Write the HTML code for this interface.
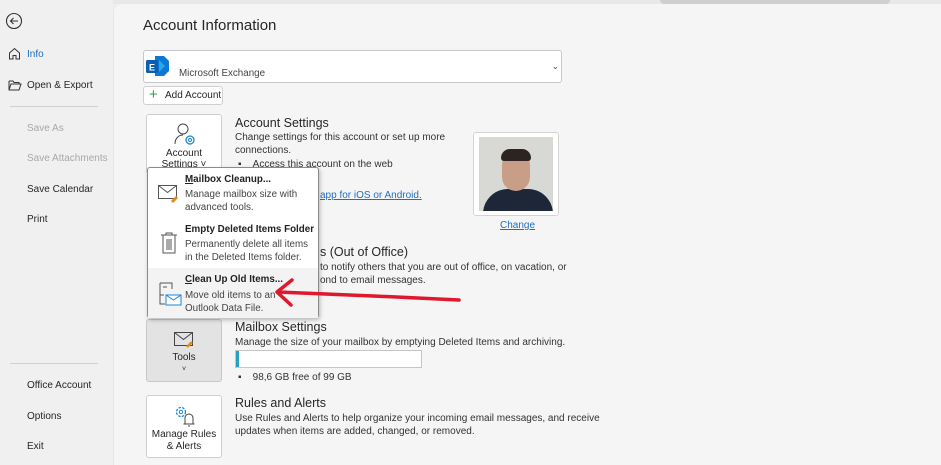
<!DOCTYPE html>
<html><head><style>
*{margin:0;padding:0;box-sizing:border-box}
body{width:941px;height:465px;overflow:hidden;background:#efefef;font-family:"Liberation Sans",sans-serif;color:#262626;position:relative;font-size:10px}
.a{position:absolute}
.side{left:0;top:0;width:113px;height:465px;background:#f0f0f0}
.si{position:absolute;left:27px;font-size:10px;color:#262626}
.dis{color:#a8a8a8}
.main{left:113px;top:4px;width:828px;height:461px;background:#f5f5f5;border-top-left-radius:8px;border-left:1px solid #e6e6e6}
.btn{position:absolute;background:#fff;border:1px solid #d0d0d0;border-radius:3px;text-align:center;font-size:10px;line-height:12px;color:#262626}
h2{position:absolute;font-size:12.5px;font-weight:normal;color:#262626}
.t{position:absolute;font-size:10px;color:#333;line-height:13px}
.menu{left:147px;top:167px;width:172px;height:151px;background:#fff;border:1px solid #8a8a8a;border-radius:3px;box-shadow:1px 2px 4px rgba(0,0,0,.25)}
.mt{position:absolute;left:37px;font-weight:bold;font-size:9.8px;color:#222}
.md{position:absolute;left:37px;font-size:9.8px;color:#444;line-height:13px}
</style></head><body>
<div class="a" style="left:0;top:0;width:941px;height:4px;background:#e8e8e8"></div>
<div class="a" style="left:660px;top:0;width:230px;height:4px;background:#cfcfcf;border-radius:0 0 20px 20px"></div>
<div class="a side"></div>
<svg class="a" style="left:5px;top:12px" width="18" height="18" viewBox="0 0 18 18"><circle cx="9" cy="9" r="7.5" fill="none" stroke="#333" stroke-width="1.1"/><path d="M13 9H5.5M8.5 6L5.5 9l3 3" fill="none" stroke="#333" stroke-width="1.1"/></svg>
<svg class="a" style="left:8px;top:47px" width="13" height="13" viewBox="0 0 13 13"><path d="M1.5 6L6.5 1.5 11.5 6V12H8V8.5H5V12H1.5Z" fill="none" stroke="#333" stroke-width="1"/></svg>
<div class="si" style="top:49px;color:#1f6fc0">Info</div>
<svg class="a" style="left:8px;top:79px" width="14" height="12" viewBox="0 0 14 12"><path d="M1 2H5l1 1.5h5V5M1 2v9h10l2-6H3L1 11" fill="none" stroke="#333" stroke-width="1"/></svg>
<div class="si" style="top:80px">Open &amp; Export</div>
<div class="a" style="left:10px;top:106px;width:88px;height:1px;background:#d0d0d0"></div>
<div class="si dis" style="top:123px">Save As</div>
<div class="si dis" style="top:153px">Save Attachments</div>
<div class="si" style="top:184px">Save Calendar</div>
<div class="si" style="top:214px">Print</div>
<div class="a" style="left:10px;top:363px;width:88px;height:1px;background:#d0d0d0"></div>
<div class="si" style="top:380px">Office Account</div>
<div class="si" style="top:411px">Options</div>
<div class="si" style="top:441px">Exit</div>

<div class="a main"></div>
<div class="a" style="left:143px;top:17px;font-size:15px;color:#262626">Account Information</div>
<div class="a" style="left:143px;top:50px;width:419px;height:33px;background:#fff;border:1px solid #c8c8c8;border-radius:3px"></div>
<svg class="a" style="left:145px;top:54px" width="26" height="24" viewBox="0 0 26 24"><path d="M10 2h9l5 5v10l-5 5h-9z" fill="#0f78d4"/><path d="M14 6l6 6-6 6" fill="#28a8ea"/><rect x="1" y="6" width="12" height="13" rx="1.5" fill="#0a5fb4"/><text x="4" y="16.5" font-size="9" font-weight="bold" fill="#fff" font-family="Liberation Sans">E</text></svg>
<div class="a" style="left:179px;top:68px;font-size:9.8px;color:#444">Microsoft Exchange</div>
<div class="a" style="left:552px;top:62px;font-size:8px;color:#444">&#8964;</div>
<div class="btn" style="left:143px;top:86px;width:80px;height:19px;line-height:17px;text-align:left;padding-left:21px">Add Account</div>
<div class="a" style="left:149px;top:88px;font-size:15px;color:#2ba640;line-height:14px">+</div>

<div class="btn" style="left:146px;top:114px;width:76px;height:60px"></div>
<svg class="a" style="left:173px;top:122px" width="26" height="26" viewBox="0 0 26 26"><circle cx="10" cy="7" r="5" fill="none" stroke="#444" stroke-width="1"/><path d="M2 22c0-5 3-9 8-9" fill="none" stroke="#444"/><circle cx="17" cy="18" r="4" fill="none" stroke="#1f84d6" stroke-width="1.3"/><circle cx="17" cy="18" r="1.5" fill="none" stroke="#1f84d6"/></svg>
<div class="a" style="left:146px;top:148px;width:76px;text-align:center;font-size:10px">Account<br>Settings ˅</div>

<h2 style="left:235px;top:116px">Account Settings</h2>
<div class="t" style="left:235px;top:131px">Change settings for this account or set up more<br>connections.</div>
<div class="t" style="left:238px;top:158px">▪&nbsp;&nbsp;&nbsp;&nbsp;Access this account on the web</div>
<div class="t" style="left:320px;top:189px;color:#1f6fc0;text-decoration:underline">app for iOS or Android.</div>
<div class="a" style="left:473px;top:132px;width:86px;height:84px;background:#fff;border:1px solid #d4d4d4;border-radius:3px"></div>
<div class="a" style="left:479px;top:137px;width:74px;height:74px;background:#d8d8d4;overflow:hidden">
<div class="a" style="left:4px;top:52px;width:70px;height:30px;background:#1d2738;border-radius:25px 25px 0 0"></div>
<div class="a" style="left:23px;top:16px;width:28px;height:38px;background:#c89e86;border-radius:12px 12px 14px 14px"></div>
<div class="a" style="left:22px;top:12px;width:30px;height:12px;background:#2c2420;border-radius:12px 12px 4px 4px"></div>
</div>
<div class="t" style="left:500px;top:219px;color:#1f6fc0;text-decoration:underline">Change</div>

<h2 style="left:320px;top:245px">s (Out of Office)</h2>
<div class="t" style="left:320px;top:261px">to notify others that you are out of office, on vacation, or<br>ond to email messages.</div>

<div class="btn" style="left:146px;top:319px;width:76px;height:63px;background:#e3e3e3;border-color:#c8c8c8"></div>
<svg class="a" style="left:173px;top:330px" width="24" height="20" viewBox="0 0 24 20"><rect x="1.5" y="2.5" width="18" height="13" fill="none" stroke="#444"/><path d="M1.5 2.5l9 7 9-7" fill="none" stroke="#444"/><path d="M14 17l5-5" stroke="#e08a1e" stroke-width="2.5"/></svg>
<div class="a" style="left:146px;top:352px;width:76px;text-align:center;font-size:10px">Tools<br><span style="font-size:7px">˅</span></div>
<h2 style="left:235px;top:320px">Mailbox Settings</h2>
<div class="t" style="left:235px;top:336px">Manage the size of your mailbox by emptying Deleted Items and archiving.</div>
<div class="a" style="left:235px;top:350px;width:187px;height:18px;background:#fff;border:1px solid #c6c6c6"><div style="width:3px;height:16px;background:#2a9fc0"></div></div>
<div class="t" style="left:238px;top:371px">▪&nbsp;&nbsp;&nbsp;&nbsp;98,6 GB free of 99 GB</div>

<div class="btn" style="left:146px;top:395px;width:76px;height:63px"></div>
<svg class="a" style="left:172px;top:404px" width="26" height="24" viewBox="0 0 26 24"><circle cx="9" cy="8" r="4.5" fill="none" stroke="#1f84d6" stroke-width="1.3" stroke-dasharray="2.5 1.2"/><circle cx="9" cy="8" r="1.7" fill="none" stroke="#1f84d6"/><path d="M13 20v-6a4 4 0 0 1 8 0v6h1.5H11.5zM16 22h2" fill="none" stroke="#444"/></svg>
<div class="a" style="left:146px;top:429px;width:76px;text-align:center;font-size:10px;line-height:12px">Manage Rules<br>&amp; Alerts</div>
<h2 style="left:235px;top:396px">Rules and Alerts</h2>
<div class="t" style="left:235px;top:412px">Use Rules and Alerts to help organize your incoming email messages, and receive<br>updates when items are added, changed, or removed.</div>

<div class="a menu">
<svg class="a" style="left:9px;top:15px" width="24" height="22" viewBox="0 0 24 22"><rect x="1.5" y="2.5" width="18" height="13" fill="none" stroke="#555"/><path d="M1.5 2.5l9 7 9-7" fill="none" stroke="#555"/><path d="M15 19l5-5" stroke="#e08a1e" stroke-width="3"/></svg>
<div class="mt" style="top:6px"><u>M</u>ailbox Cleanup...</div>
<div class="md" style="top:20px">Manage mailbox size with<br>advanced tools.</div>
<svg class="a" style="left:12px;top:63px" width="18" height="24" viewBox="0 0 18 24"><path d="M1 4h16M6 4V2h6v2M3 4v18h12V4M7 8v11M9 8v11M11 8v11" fill="none" stroke="#555"/></svg>
<div class="mt" style="top:56px">Empty Deleted Items Folder</div>
<div class="md" style="top:70px">Permanently delete all items<br>in the Deleted Items folder.</div>
<div class="a" style="left:0;top:100px;width:170px;height:50px;background:#f3f3f3"></div>
<svg class="a" style="left:10px;top:114px" width="26" height="26" viewBox="0 0 26 26"><path d="M2 1h12v6M2 1v12h4M2 13v9h5M5 5h4" fill="none" stroke="#555"/><rect x="8" y="13" width="15" height="10" fill="#fff" stroke="#1f84d6"/><path d="M8 13l7.5 5 7.5-5" fill="none" stroke="#1f84d6"/></svg>
<div class="mt" style="top:106px"><u>C</u>lean Up Old Items...</div>
<div class="md" style="top:121px">Move old items to an<br>Outlook Data File.</div>
</div>
<svg class="a" style="left:270px;top:275px" width="195" height="35" viewBox="0 0 195 35"><path d="M8 17C60 19 130 22 189 25" stroke="#e0182d" stroke-width="3.5" fill="none" stroke-linecap="round"/><path d="M22 5L7 17l14 13" stroke="#e0182d" stroke-width="3.5" fill="none" stroke-linecap="round" stroke-linejoin="round"/></svg>
</body></html>
